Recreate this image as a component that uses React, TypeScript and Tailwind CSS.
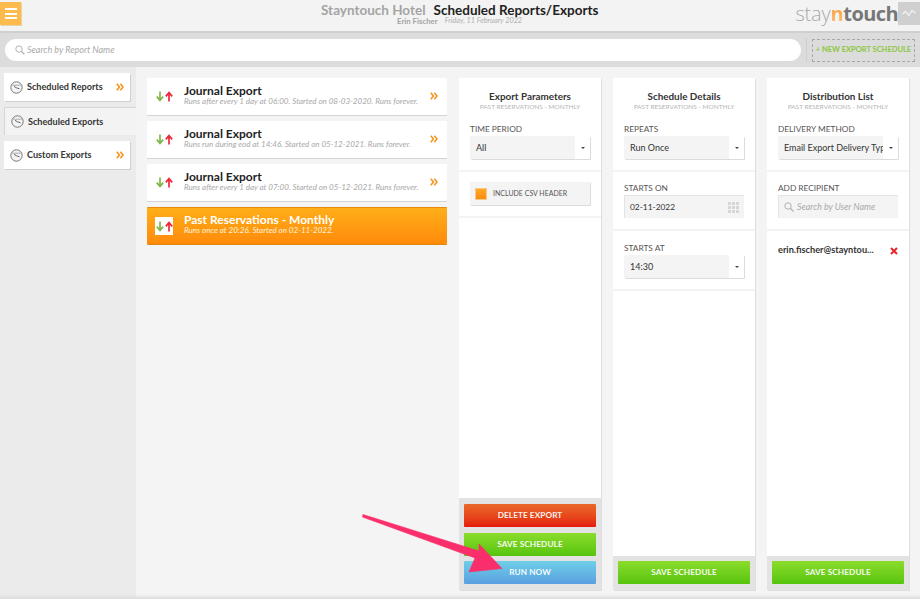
import React from "react";

const font = { fontFamily: 'Lato, "Noto Sans", sans-serif' };
const logoFont = { fontFamily: '"Open Sans", sans-serif' };

function Clock() {
  return (
    <svg width="13" height="13" viewBox="0 0 13 13" className="shrink-0">
      <circle cx="6.5" cy="6.5" r="5.7" fill="#f4f4f4" stroke="#777" strokeWidth="1" />
      <path d="M2.2 4.2h8.6" stroke="#999" strokeWidth="0.8" />
      <path d="M6.5 6.8 L4 5.4 M6.5 6.8 L9.5 7.8" stroke="#555" strokeWidth="0.9" fill="none" />
    </svg>
  );
}

function Chevrons() {
  return (
    <svg width="8" height="8" viewBox="0 0 8 8" className="shrink-0">
      <path d="M0.8 0.8 L3.4 4 L0.8 7.2 M4.4 0.8 L7 4 L4.4 7.2" stroke="#f7941d" strokeWidth="1.6" fill="none" />
    </svg>
  );
}

function Arrows() {
  return (
    <svg width="17" height="11" viewBox="0 0 17 11" className="shrink-0">
      <path d="M4 0.5 V9 M0.8 5.6 L4 9.4 L7.2 5.6" stroke="#7fb84a" strokeWidth="1.7" fill="none" />
      <path d="M13 10.5 V2 M9.8 5.4 L13 1.6 L16.2 5.4" stroke="#ee2a3a" strokeWidth="1.7" fill="none" />
    </svg>
  );
}

function Magnifier() {
  return (
    <svg width="10" height="10" viewBox="0 0 10 10" className="shrink-0">
      <circle cx="4" cy="4" r="3.2" fill="none" stroke="#aaa" strokeWidth="0.9" />
      <path d="M6.4 6.4 L9.4 9.4" stroke="#aaa" strokeWidth="1.3" />
    </svg>
  );
}

function SideItem({ label, active }: { label: string; active?: boolean }) {
  if (active) {
    return (
      <div className="h-[28px] ml-1 flex items-center pl-[6px] gap-[4px] bg-[#f3f3f3] border-l border-t border-[#d6d6d6] rounded-tl-[1px]">
        <Clock />
        <span className="text-[9.1px] font-bold text-[#333]">{label}</span>
      </div>
    );
  }
  return (
    <div className="h-[28px] ml-1 mr-[6px] flex items-center pl-[6px] pr-[6px] gap-[4px] bg-white shadow-[1px_1px_0_#cfcfcf] rounded-[1px]">
      <Clock />
      <span className="text-[9.1px] font-bold text-[#333] flex-1">{label}</span>
      <Chevrons />
    </div>
  );
}

function ReportCard({ title, sub, active }: { title: string; sub: string; active?: boolean }) {
  return (
    <div
      className={
        active
          ? "h-[37px] flex items-center rounded-[1px] bg-gradient-to-b from-[#ffae18] to-[#ff8a0a] border-t border-[#e88a0c] shadow-[0_1px_0_#e0860c]"
          : "h-[37px] flex items-center rounded-[1px] bg-white shadow-[0_1px_0_#d4d4d4]"
      }
    >
      <div className="w-[37px] shrink-0 flex justify-start pl-[8px]">
        {active ? (
          <div className="w-[18px] h-[18px] bg-white flex items-center justify-center">
            <Arrows />
          </div>
        ) : (
          <div className="pl-[1px]">
            <Arrows />
          </div>
        )}
      </div>
      <div className="flex-1 min-w-0 flex flex-col pb-[4px]">
        <span className={`text-[12px] leading-[13px] font-bold ${active ? "text-white" : "text-[#222]"}`}>{title}</span>
        <span className={`text-[8px] leading-[9px] italic whitespace-nowrap ${active ? "text-[#fff3dc]" : "text-[#a8a8a8]"}`}>{sub}</span>
      </div>
      {!active && (
        <div className="pr-[9px] pb-[1px]">
          <Chevrons />
        </div>
      )}
    </div>
  );
}

function Select({ value }: { value: string }) {
  return (
    <div className="h-[23px] flex bg-[#f4f4f4] shadow-[1px_1px_0_#dcdcdc] rounded-[1px]">
      <div className="flex-1 min-w-0 overflow-hidden whitespace-nowrap pl-[6px] text-[9px] leading-[23px] text-[#333]">{value}</div>
      <div className="w-[15px] shrink-0 bg-white flex items-center justify-center">
        <span className="block w-0 h-0 border-l-[2px] border-r-[2px] border-t-[2.5px] border-l-transparent border-r-transparent border-t-[#444]" />
      </div>
    </div>
  );
}

function Label({ children }: { children: React.ReactNode }) {
  return <div className="text-[8.3px] leading-[10px] text-[#555] mb-[2px]">{children}</div>;
}

function Section({ children, top }: { children: React.ReactNode; top: string }) {
  return <div className={`px-[11px] pb-[11px] border-b-2 border-[#f3f3f3] ${top}`}>{children}</div>;
}

function Btn({ children, className }: { children: React.ReactNode; className: string }) {
  return (
    <div className={`h-[23px] rounded-[1px] flex items-center justify-center text-[8.2px] font-bold text-white/95 tracking-[0.1px] ${className}`}>
      {children}
    </div>
  );
}

function Panel({ title, children, footer, footerClass }: { title: string; children: React.ReactNode; footer: React.ReactNode; footerClass: string }) {
  return (
    <div className="w-[142px] flex flex-col bg-white shadow-[1px_1px_0_#dedede]">
      <div className="h-[45px] pt-[12px] text-center">
        <div className="text-[9.9px] leading-[12px] font-bold text-[#333]">{title}</div>
        <div className="text-[6.5px] leading-[9px] text-[#b5b5b5]">PAST RESERVATIONS - MONTHLY</div>
      </div>
      <div className="flex-1 flex flex-col">{children}</div>
      <div className={`bg-[#e3e3e3] px-[5px] pb-[6px] flex flex-col gap-[5.5px] ${footerClass}`}>{footer}</div>
    </div>
  );
}

const SaveBtn = () => <Btn className="bg-gradient-to-b from-[#8bdc2a] to-[#55c40d]">SAVE SCHEDULE</Btn>;

export default function App() {
  return (
    <div className="relative w-[920px] h-[599px] overflow-hidden flex flex-col bg-[#f4f4f4]" style={font}>
      {/* Top bar */}
      <header className="h-[33px] shrink-0 flex items-center relative bg-[#f3f3f3] border-b-2 border-[#cfcfcf]">
        <div className="w-[21px] h-[23px] mb-[4px] bg-[#fdbb4d] shadow-[1px_1px_0_#e6d3a8] flex flex-col items-center justify-center gap-[2.5px]">
          <span className="block w-[12px] h-[2px] bg-white" />
          <span className="block w-[12px] h-[2px] bg-white" />
          <span className="block w-[12px] h-[2px] bg-white" />
        </div>
        <div className="flex-1 pl-[300px] flex flex-col pb-[3px]">
          <div className="flex gap-[8px] items-baseline leading-[14px]">
            <span className="text-[13.5px] font-bold text-[#a4a4a4]">Stayntouch Hotel</span>
            <span className="text-[13.5px] font-bold text-[#222]">Scheduled Reports/Exports</span>
          </div>
          <div className="flex gap-[7px] leading-[8px] pl-[76px]">
            <span className="text-[7.8px] font-bold text-[#a4a4a4]">Erin Fischer</span>
            <span className="text-[7.3px] italic text-[#b0b0b0]">Friday, 11 February 2022</span>
          </div>
        </div>
        <div className="flex items-center h-[33px] pb-[5px]">
          <span className="text-[20px] leading-[23px] tracking-[-0.2px] text-[#aaa] font-light" style={logoFont}>
            stay
          </span>
          <span className="text-[20px] leading-[23px] font-bold bg-gradient-to-b from-[#f7941d] to-[#fbc27a] bg-clip-text text-transparent tracking-[-0.2px]" style={logoFont}>n</span>
          <span className="text-[20px] leading-[23px] font-bold text-[#777] tracking-[-0.6px]" style={logoFont}>touch</span>
          <div className="w-[22px] h-[23px] bg-[#cfcfcf] flex items-center justify-center">
            <svg width="14" height="8" viewBox="0 0 14 8">
              <path d="M0.5 5 L3.5 2.5 L7 6.5 L10 1.5 L13.5 4" stroke="#f2f2f2" strokeWidth="1.3" fill="none" />
            </svg>
          </div>
        </div>
      </header>

      {/* Search band */}
      <div className="h-[34px] shrink-0 bg-[#dcdcdc] flex items-center pl-[5px] pr-[5px]">
        <div className="w-[796px] h-[22px] rounded-full bg-white flex items-center pl-[10px] gap-[2px]">
          <Magnifier />
          <span className="text-[9px] italic text-[#aaa]">Search by Report Name</span>
        </div>
        <div className="w-px h-[24px] bg-[#cfcfcf] ml-[5px]" />
        <div className="ml-[5px] w-[103px] h-[23px] border border-dashed border-[#a9a9a9] flex items-center justify-center text-[7.5px] font-bold text-[#8cc63f] whitespace-nowrap">
          + NEW EXPORT SCHEDULE
        </div>
      </div>

      <div className="flex-1 min-h-0 flex">
        {/* Sidebar */}
        <aside className="w-[136px] shrink-0 bg-[#ebebeb] pt-[6px] flex flex-col gap-[6px]">
          <SideItem label="Scheduled Reports" />
          <SideItem label="Scheduled Exports" active />
          <SideItem label="Custom Exports" />
        </aside>

        {/* Report list */}
        <main className="w-[300px] ml-[11px] pt-[11px] flex flex-col gap-[6px] shrink-0">
          <ReportCard title="Journal Export" sub="Runs after every 1 day at 06:00. Started on 08-03-2020. Runs forever." />
          <ReportCard title="Journal Export" sub="Runs run during eod at 14:46. Started on 05-12-2021. Runs forever." />
          <ReportCard title="Journal Export" sub="Runs after every 1 day at 07:00. Started on 05-12-2021. Runs forever." />
          <ReportCard active title="Past Reservations - Monthly" sub="Runs once at 20:26. Started on 02-11-2022." />
        </main>

        {/* Detail panels */}
        <div className="ml-[12px] pt-[11px] pb-[9px] flex gap-[12px]">
          <Panel
            title="Export Parameters"
            footerClass="pt-[6px]"
            footer={
              <>
                <Btn className="bg-gradient-to-b from-[#e9682a] to-[#e5170c]">DELETE EXPORT</Btn>
                <SaveBtn />
                <Btn className="bg-gradient-to-b from-[#6fcfe6] to-[#5a9fe0]">RUN NOW</Btn>
              </>
            }
          >
            <Section top="pt-[1px]">
              <Label>TIME PERIOD</Label>
              <Select value="All" />
            </Section>
            <Section top="pt-[10px]">
              <div className="h-[23px] bg-[#f4f4f4] shadow-[1px_1px_0_#dcdcdc] flex items-center pl-[5px] gap-[6px]">
                <span className="block w-[12px] h-[12px] bg-gradient-to-b from-[#ffa726] to-[#fb8c0a] border border-[#f5c98a]" />
                <span className="text-[7px] text-[#555]">INCLUDE CSV HEADER</span>
              </div>
            </Section>
          </Panel>

          <Panel title="Schedule Details" footerClass="pt-[5px]" footer={<SaveBtn />}>
            <Section top="pt-[1px]">
              <Label>REPEATS</Label>
              <Select value="Run Once" />
            </Section>
            <Section top="pt-[11px]">
              <Label>STARTS ON</Label>
              <div className="h-[23px] bg-[#f4f4f4] border-l border-t border-[#e4e4e4] flex items-center pl-[5px] pr-[5px] justify-between">
                <span className="text-[8.4px] text-[#333]">02-11-2022</span>
                <div className="grid grid-cols-3 gap-[1px]">
                  {Array.from({ length: 9 }).map((_, i) => (
                    <span key={i} className="block w-[3px] h-[3px] bg-[#d6d6d6]" />
                  ))}
                </div>
              </div>
            </Section>
            <Section top="pt-[12px]">
              <Label>STARTS AT</Label>
              <Select value="14:30" />
            </Section>
          </Panel>

          <Panel title="Distribution List" footerClass="pt-[5px]" footer={<SaveBtn />}>
            <Section top="pt-[1px]">
              <Label>DELIVERY METHOD</Label>
              <Select value="Email Export Delivery Type" />
            </Section>
            <Section top="pt-[11px]">
              <Label>ADD RECIPIENT</Label>
              <div className="h-[23px] bg-[#f4f4f4] border-l border-t border-[#e4e4e4] flex items-center pl-[5px] gap-[3px]">
                <Magnifier />
                <span className="text-[8.9px] italic text-[#aaa]">Search by User Name</span>
              </div>
            </Section>
            <div className="pl-[11px] pr-[11px] pt-[12px] flex items-center justify-between">
              <span className="text-[9.2px] font-bold text-[#333]">erin.fischer@stayntou...</span>
              <svg width="8" height="8" viewBox="0 0 8 8" className="mt-[2px]">
                <path d="M1 1 L7 7 M7 1 L1 7" stroke="#e8262a" strokeWidth="2" />
              </svg>
            </div>
          </Panel>
        </div>
      </div>

      {/* Bottom edge shade of the window */}
      <div className="absolute left-0 right-0 bottom-0 h-[5px] bg-gradient-to-b from-transparent to-[#dcdcdc] pointer-events-none" />

      {/* Annotation arrow */}
      <svg className="absolute left-0 top-0 pointer-events-none" width="920" height="599" viewBox="0 0 920 599">
        <polygon points="363,514.5 479,551 479,544 502,568.5 469,572 475,558 362.5,517" fill="#fb2e6c" stroke="#fb2e6c" strokeWidth="0.6" strokeLinejoin="round" />
      </svg>
    </div>
  );
}
